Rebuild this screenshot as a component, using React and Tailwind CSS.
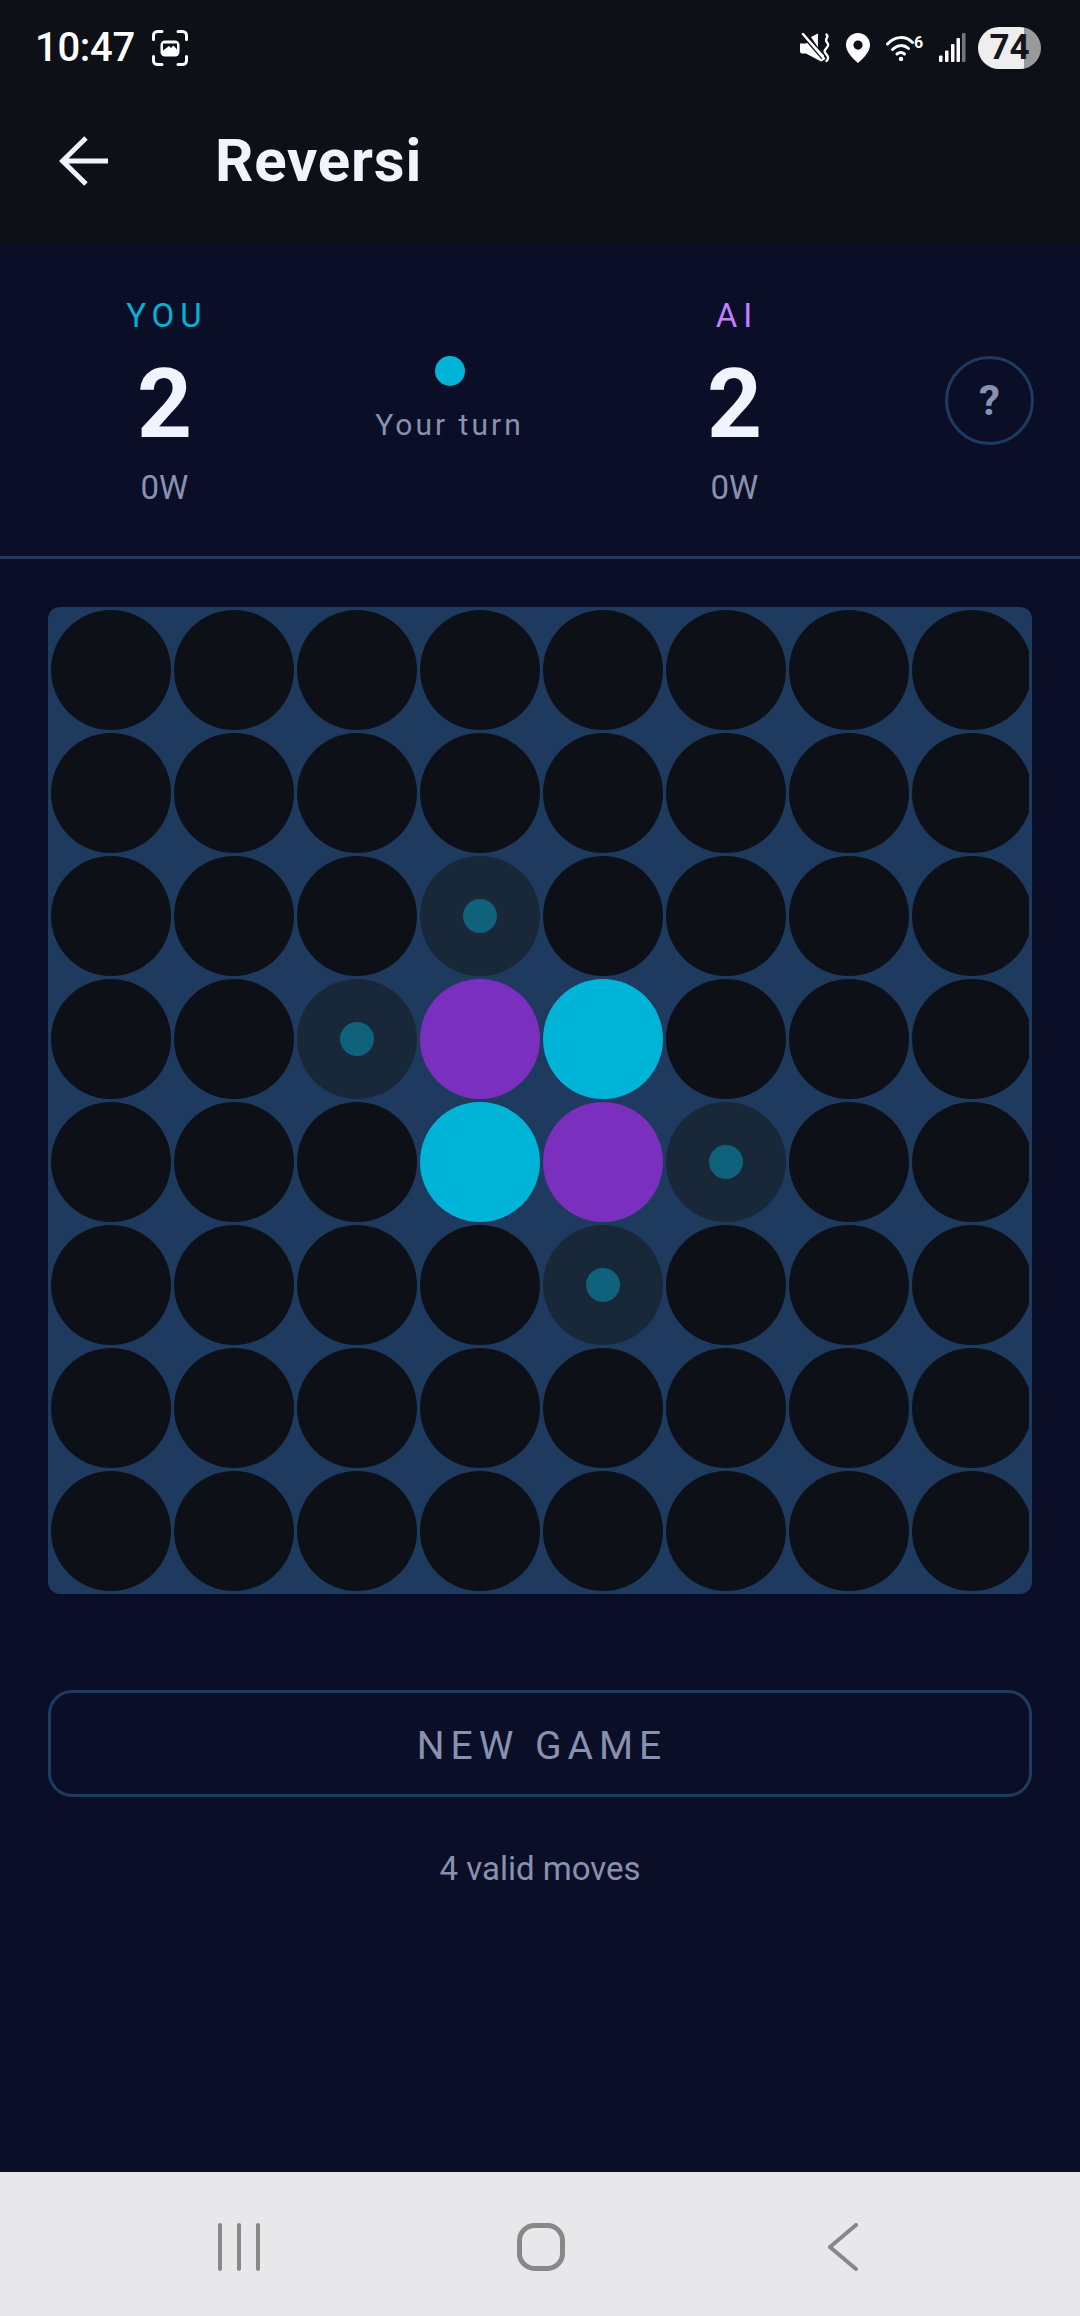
const boardRows = [
  "........",
  "........",
  "...h....",
  "..hpc...",
  "...cph..",
  "....h...",
  "........",
  "........",
];

function Disc({ kind }) {
  if (kind === "p") return <div className="w-[120px] h-[120px] shrink-0 rounded-full bg-[#7b2fbe]" />;
  if (kind === "c") return <div className="w-[120px] h-[120px] shrink-0 rounded-full bg-[#00b4d8]" />;
  if (kind === "h") {
    return (
      <div className="w-[120px] h-[120px] shrink-0 rounded-full bg-[#192838] flex items-center justify-center">
        <div className="w-[34px] h-[34px] rounded-full bg-[#10627c]" />
      </div>
    );
  }
  return <div className="w-[120px] h-[120px] shrink-0 rounded-full bg-[#0d1117]" />;
}

function StatusBar() {
  return (
    <div className="h-[96px] flex items-center pl-[35px] pr-[39px] text-white">
      <span className="text-[40px] leading-[46px] font-medium tracking-[-0.3px]">10:47</span>
      <svg width="36" height="36" viewBox="0 0 36 36" fill="none" className="ml-[17px]">
        <path d="M1.500 9.500V5.500a4 4 0 0 1 4-4h4.500M26 1.500h4.500a4 4 0 0 1 4 4v4M34.500 26.500v4a4 4 0 0 1-4 4H26M10 34.500H5.500a4 4 0 0 1-4-4v-4" stroke="white" strokeWidth="3" strokeLinecap="round" />
        <rect x="8.500" y="10.500" width="19" height="16" rx="4.500" fill="white" />
        <path d="M11 13.500h14v6l-3.500-4-2.500 2.500-2-2-6 4.500z" fill="#0d1117" />
      </svg>
      <div className="ml-auto flex items-center">
        <svg width="30" height="30" viewBox="0 0 30 30" fill="none" className="shrink-0">
          <path d="M0 10.500h6l4-3 14 15v4.500l-3 1.500-15-8H2a2 2 0 0 1-2-2z" fill="white" />
          <path d="M11 4l7-3.500v14z" fill="white" />
          <path d="M1.500 1.500l21 24" stroke="#0d1117" strokeWidth="2.500" />
          <path d="M3 1l21 24.500" stroke="white" strokeWidth="2.500" strokeLinecap="round" />
          <path d="M26.500 1.500c3 3-2 4 0 7s2.500 3.500 0 6.500-2.500 3.500 0 6.500 2 4.500 0 6.500" stroke="white" strokeWidth="2.400" strokeLinecap="round" />
        </svg>
        <svg width="24" height="30" viewBox="0 0 24 30" className="ml-[16px] shrink-0">
          <path fillRule="evenodd" d="M12 0C5.300 0 0 5.300 0 12c0 7.500 8 14.500 12 18 4-3.500 12-10.500 12-18C24 5.300 18.700 0 12 0zm0 7.500a4.600 4.600 0 1 1 0 9.200 4.600 4.600 0 0 1 0-9.200z" fill="white" />
        </svg>
        <div className="ml-[16px] w-[37px] h-[26px] flex shrink-0">
          <svg width="28" height="26" viewBox="0 0 28 26" fill="none" className="shrink-0">
            <path d="M1.500 9C8.500 1 19.500 0.500 26.500 7.500" stroke="white" strokeWidth="3" strokeLinecap="round" />
            <path d="M6.500 14.500C11.500 9.500 18 9.500 22.500 13.500" stroke="white" strokeWidth="3" strokeLinecap="round" />
            <path d="M11 19C13.500 17 16 17 18.500 19" stroke="white" strokeWidth="3" strokeLinecap="round" />
            <circle cx="15" cy="24" r="2.200" fill="white" />
          </svg>
          <span className="mt-[1px] text-[16px] leading-[14px] font-bold">6</span>
        </div>
        <svg width="28" height="30" viewBox="0 0 28 30" className="ml-[15px] shrink-0">
          <rect x="1" y="22.500" width="3.500" height="6.500" rx="1" fill="white" />
          <rect x="7" y="17.500" width="3.500" height="11.500" rx="1" fill="white" />
          <rect x="13" y="11" width="3.500" height="18" rx="1" fill="white" />
          <rect x="18.500" y="5" width="3.500" height="24" rx="1" fill="white" />
          <rect x="24" y="0" width="3.500" height="29" rx="1" fill="#777777" />
        </svg>
        <div className="ml-[12px] w-[63px] h-[42px] rounded-full bg-[linear-gradient(90deg,#eeeeee_0,#eeeeee_46px,#9a9a9a_46px)] flex items-center justify-center text-[#14161c] text-[35px] leading-[42px] font-bold">
          74
        </div>
      </div>
    </div>
  );
}

function PlayerStat({ label, labelColor }) {
  return (
    <div className="w-[285px] pt-[4px] flex flex-col items-center">
      <span className={`text-[33px] leading-[40px] tracking-[6px] pl-[5px] ${labelColor}`}>{label}</span>
      <span className="mt-[12px] mb-[7.500px] text-[96px] leading-[112px] font-bold text-[#f0f4ff]">2</span>
      <span className="text-[33px] leading-[40px] text-[#8892b0]">0W</span>
    </div>
  );
}

function NavBar() {
  return (
    <div className="h-[144px] bg-[#e8e8ea] flex items-center justify-center pl-[2px] pt-[5px]">
      <div className="w-[302px] flex justify-center">
        <svg width="42" height="48" viewBox="0 0 42 48" fill="none" stroke="#888888" strokeWidth="4" strokeLinecap="round">
          <path d="M2 2v44M21 2v44M40 2v44" />
        </svg>
      </div>
      <div className="w-[302px] flex justify-center">
        <svg width="48" height="48" viewBox="0 0 48 48" fill="none">
          <rect x="2.500" y="2.500" width="43" height="43" rx="15" stroke="#888888" strokeWidth="5" />
        </svg>
      </div>
      <div className="w-[302px] flex justify-center">
        <svg width="30" height="48" viewBox="0 0 30 48" fill="none" stroke="#888888" strokeWidth="4" strokeLinecap="round" strokeLinejoin="round">
          <path d="M28 2L2 24l26 22" />
        </svg>
      </div>
    </div>
  );
}

export default function App() {
  return (
    <div className="w-[1080px] h-[2316px] flex flex-col bg-[#0a0e27] font-['Roboto',sans-serif]">
      <div className="h-[244px] bg-[#0d1117]">
        <StatusBar />
        <div className="h-[130px] flex items-center pl-[59px]">
          <svg width="50" height="50" viewBox="0 0 50 50" fill="none" stroke="#f0f4ff" strokeWidth="5">
            <path d="M49 25H4M27 2L3.500 25 27 48" />
          </svg>
          <h1 className="ml-[106px] text-[60px] leading-[66px] font-bold tracking-[0.8px] text-[#f0f4ff]">Reversi</h1>
        </div>
      </div>

      <div className="h-[315px] flex items-center pl-[22px] border-b-[3px] border-[#1e3a5f]">
        <PlayerStat label="YOU" labelColor="text-[#00b4d8]" />
        <div className="w-[285px] flex flex-col items-center">
          <div className="w-[30px] h-[30px] rounded-full bg-[#00b4d8]" />
          <span className="mt-[19px] text-[30px] leading-[40px] tracking-[3px] text-[#8892b0]">Your turn</span>
        </div>
        <PlayerStat label="AI" labelColor="text-[#c77dff]" />
        <button className="ml-[68px] w-[89px] h-[89px] rounded-full border-[3px] border-[#1e3a5f] flex items-center justify-center text-[#8892b0] text-[42px] font-bold">
          ?
        </button>
      </div>

      <div className="flex-1 flex flex-col px-[48px] pt-[48px]">
        <div className="w-[984px] p-[3px] rounded-[12px] bg-[#1e3a5f]">
          <div className="w-[978px] flex flex-col gap-[3px] overflow-hidden">
            {boardRows.map((row, r) => (
              <div key={r} className="flex gap-[3px]">
                {row.split("").map((cell, c) => (
                  <Disc key={c} kind={cell} />
                ))}
              </div>
            ))}
          </div>
        </div>

        <button className="mt-[96px] h-[107px] w-[984px] pt-[6px] pl-[4px] rounded-[24px] border-[3px] border-[#1e3a5f] text-[39px] tracking-[6px] text-[#8892b0]">
          NEW GAME
        </button>
        <p className="mt-[52px] text-center text-[33px] leading-[40px] text-[#8892b0]">4 valid moves</p>
      </div>

      <NavBar />
    </div>
  );
}
